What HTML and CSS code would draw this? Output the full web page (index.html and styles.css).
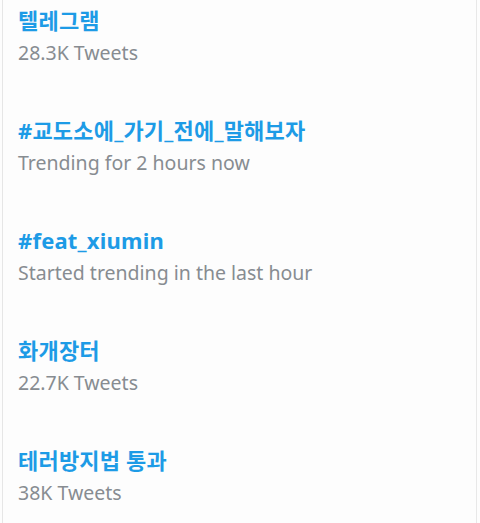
FILE: index.html
```html
<!DOCTYPE html>
<html lang="ko">
<head>
<meta charset="utf-8">
<link rel="stylesheet" href="styles.css">
</head>
<body>
<div class="frame">
  <ul class="trends">
    <li class="trend">
      <div class="title">텔레그램</div>
      <div class="meta">28.3K Tweets</div>
    </li>
    <li class="trend">
      <div class="title">#교도소에_가기_전에_말해보자</div>
      <div class="meta">Trending for 2 hours now</div>
    </li>
    <li class="trend">
      <div class="title">#feat_xiumin</div>
      <div class="meta">Started trending in the last hour</div>
    </li>
    <li class="trend">
      <div class="title">화개장터</div>
      <div class="meta">22.7K Tweets</div>
    </li>
    <li class="trend">
      <div class="title">테러방지법 통과</div>
      <div class="meta">38K Tweets</div>
    </li>
  </ul>
</div>
</body>
</html>
```
FILE: styles.css
```css
html, body {
  margin: 0;
  padding: 0;
  background: #fdfdfd;
}
.frame {
  height: 523px;
  box-sizing: border-box;
  margin-left: 2px;
  width: 475px;
  border-left: 1px solid #e6e6e6;
  border-right: 1px solid #e8e8e8;
  overflow: hidden;
}
.trends {
  list-style: none;
  margin: 0;
  padding: 3px 0 0 15px;
}
.trend {
  height: 110px;
  display: flex;
  flex-direction: column;
}
.title {
  font-family: "Noto Sans", "Noto Sans CJK KR", sans-serif;
  font-weight: 700;
  font-size: 22px;
  line-height: 34px;
  color: #1d9be6;
  letter-spacing: 0.2px;
}
.meta {
  font-family: "Noto Sans", "Noto Sans CJK KR", sans-serif;
  font-size: 19.5px;
  line-height: 30px;
  margin-top: 1px;
  color: #878c91;
}
```
